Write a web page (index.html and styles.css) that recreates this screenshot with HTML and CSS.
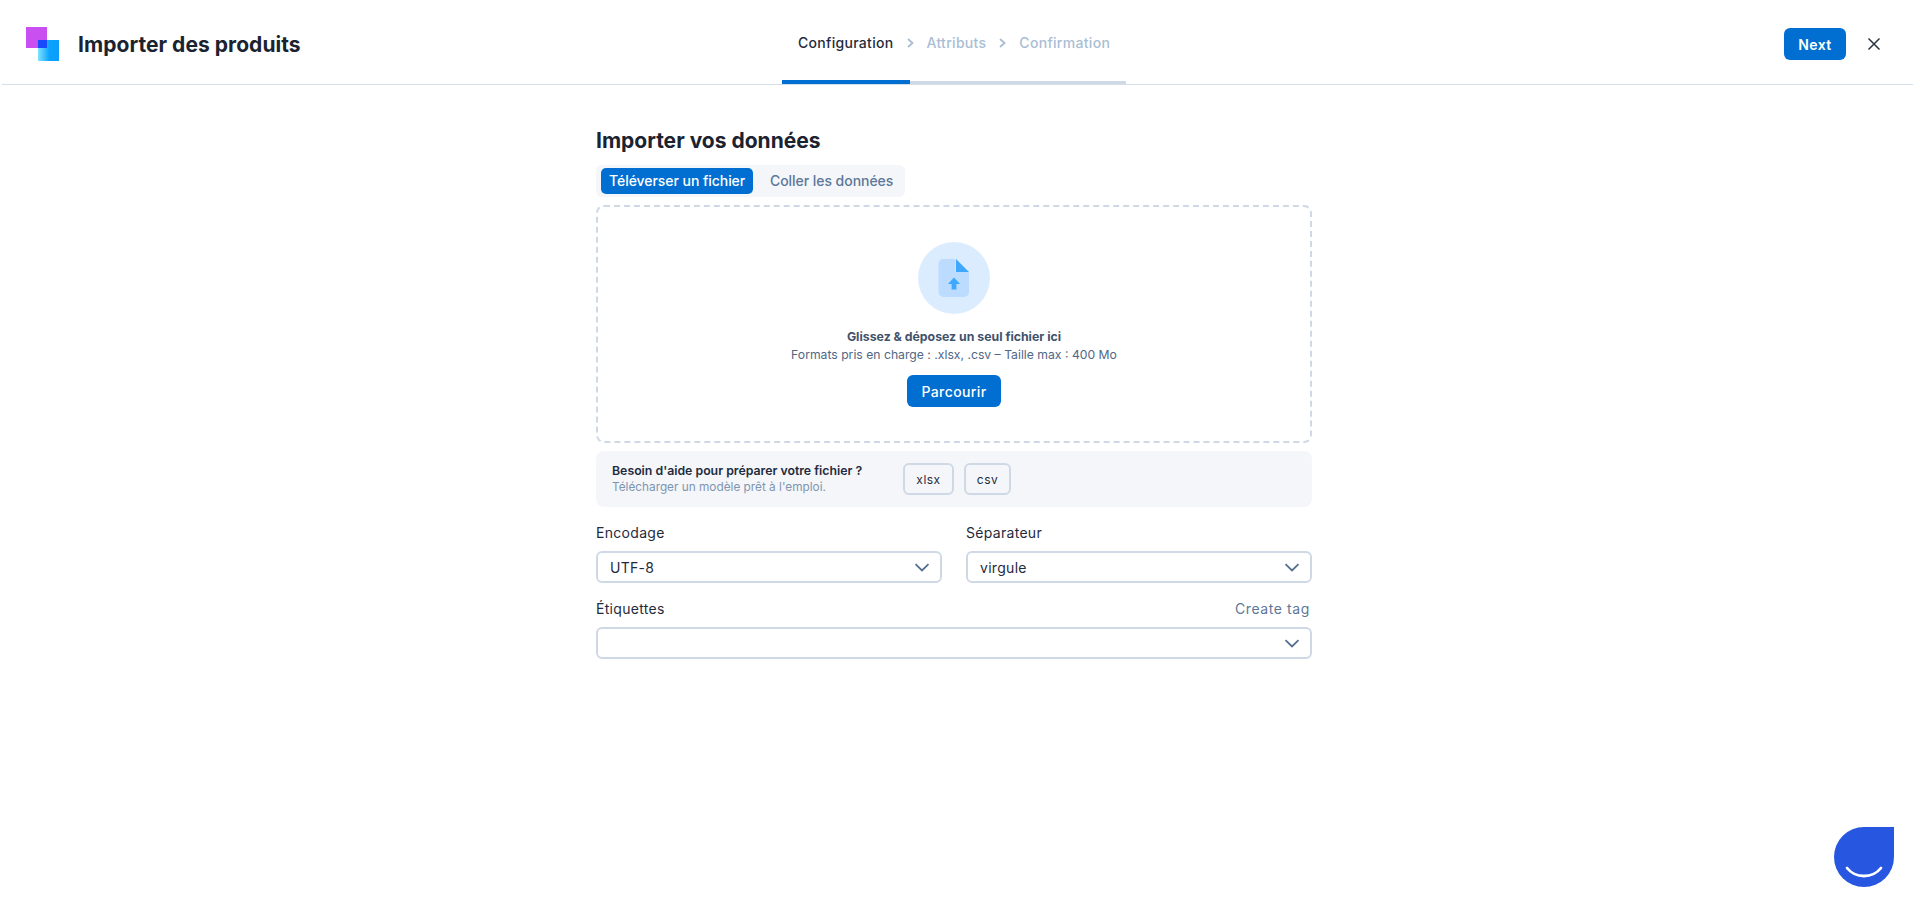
FILE: index.html
```html
<html>
  <head>
    <meta charset="UTF-8" />
    <meta name="viewport" content="width=device-width, initial-scale=1.0" />
    <title>Importer des produits</title>
    <link rel="stylesheet" href="styles.css">
  </head>
  <body>
    <div class="topbar">
      <div class="brand">
        <svg class="logo" width="33" height="34" viewBox="0 0 33 34">
          <defs>
            <linearGradient id="blueGrad" x1="0" y1="0" x2="1" y2="0">
              <stop offset="0" stop-color="#7fe3ff" />
              <stop offset="0.55" stop-color="#0aa2ff" />
              <stop offset="1" stop-color="#0a9dfc" />
            </linearGradient>
          </defs>
          <rect x="0" y="0" width="21" height="21" fill="#c94ff0" />
          <rect x="12" y="13" width="21" height="21" fill="url(#blueGrad)" />
          <rect x="12" y="13" width="9" height="8" fill="#1849fb" />
        </svg>
        <span class="brand-title">Importer des produits</span>
      </div>
      <div class="steps">
        <span class="step step-active">Configuration</span>
        <svg class="step-arrow" width="7" height="10" viewBox="0 0 7 10"><path d="M1 1l4.500 4L1 9" fill="none" stroke="#a9bdd3" stroke-width="1.800"/></svg>
        <span class="step">Attributs</span>
        <svg class="step-arrow" width="7" height="10" viewBox="0 0 7 10"><path d="M1 1l4.500 4L1 9" fill="none" stroke="#a9bdd3" stroke-width="1.800"/></svg>
        <span class="step">Confirmation</span>
        <div class="step-progress"><div class="step-progress-done"></div></div>
      </div>
      <div class="top-actions">
        <button class="btn btn-next">Next</button>
        <button class="close">
          <svg width="14" height="14" viewBox="0 0 14 14"><path d="M1.500 1.500l11 11M12.500 1.500l-11 11" fill="none" stroke="#2a3342" stroke-width="1.500"/></svg>
        </button>
      </div>
    </div>

    <div class="main">
      <div class="panel">
        <h1>Importer vos données</h1>
        <div class="tabs">
          <div class="tab tab-active">Téléverser un fichier</div>
          <div class="tab">Coller les données</div>
        </div>
        <div class="dropzone">
          <div class="drop-icon">
            <svg width="32" height="38" viewBox="0 0 32 38">
              <path d="M5 0H17V13H30.500V33a5 5 0 0 1-5 5H5a5 5 0 0 1-5-5V5a5 5 0 0 1 5-5Z" fill="#bbdcff" transform="translate(0.500 0)"/>
              <path d="M18 0L31 13H18Z" fill="#3ea8ff"/>
              <path d="M16 18.500l6 6.500h-3.600v5.500h-4.800V25H10Z" fill="#3ea8ff"/>
            </svg>
          </div>
          <div class="drop-title">Glissez &amp; déposez un seul fichier ici</div>
          <div class="drop-sub">Formats pris en charge : .xlsx, .csv – Taille max : 400 Mo</div>
          <button class="btn btn-browse">Parcourir</button>
        </div>
        <div class="help">
          <div class="help-text">
            <div class="help-title">Besoin d'aide pour préparer votre fichier ?</div>
            <div class="help-sub">Télécharger un modèle prêt à l'emploi.</div>
          </div>
          <button class="file-btn">xlsx</button>
          <button class="file-btn file-btn-csv">csv</button>
        </div>
        <div class="fields">
          <div class="field">
            <div class="field-head"><label>Encodage</label></div>
            <div class="select">
              <span>UTF-8</span>
              <svg width="16" height="9" viewBox="0 0 16 9"><path d="M1.500 1.200L8 7.500l6.500-6.300" fill="none" stroke="#54708f" stroke-width="1.800"/></svg>
            </div>
          </div>
          <div class="field">
            <div class="field-head"><label>Séparateur</label></div>
            <div class="select">
              <span>virgule</span>
              <svg width="16" height="9" viewBox="0 0 16 9"><path d="M1.500 1.200L8 7.500l6.500-6.300" fill="none" stroke="#54708f" stroke-width="1.800"/></svg>
            </div>
          </div>
          <div class="field field-wide">
            <div class="field-head"><label>Étiquettes</label><a class="create-tag">Create tag</a></div>
            <div class="select">
              <span></span>
              <svg width="16" height="9" viewBox="0 0 16 9"><path d="M1.500 1.200L8 7.500l6.500-6.300" fill="none" stroke="#54708f" stroke-width="1.800"/></svg>
            </div>
          </div>
        </div>
      </div>
    </div>

    <div class="chat-bubble">
      <svg width="40" height="14" viewBox="0 0 40 14"><path d="M3 3c4 5 10 8 17 8s13-3 17-8" fill="none" stroke="#fff" stroke-width="2.800" stroke-linecap="round"/></svg>
    </div>
  </body>
</html>
```

FILE: styles.css
```css
* {
  box-sizing: border-box;
}
body {
  margin: 0;
  background-color: white;
  font-family: "Inter", "Noto Sans", sans-serif;
  color: #1b2330;
}
button {
  font-family: inherit;
  cursor: pointer;
}
.topbar {
  display: grid;
  grid-template-columns: 756.5px 344px 1fr;
  align-items: center;
  height: 85px;
  margin-left: 2px;
  padding: 0 26px 0 23.5px;
  border-bottom: 1px solid #d5dfea;
}
.brand {
  display: flex;
  align-items: center;
  gap: 19.5px;
  padding-top: 4px;
}
.brand-title {
  font-size: 21px;
  font-weight: 700;
  letter-spacing: 0.05px;
  color: #1b2330;
}
.steps {
  position: relative;
  display: flex;
  align-items: center;
  gap: 13px;
  height: 84px;
  padding-left: 16px;
  font-size: 14px;
  font-weight: 500;
  letter-spacing: 0.3px;
}
.step {
  color: #a9bdd3;
}
.step-active {
  color: #1f2b3d;
}
.step-arrow {
  margin-top: 2px;
}
.step-progress {
  position: absolute;
  left: 0;
  right: 0;
  bottom: 0;
  height: 3px;
  background-color: #cfd9e5;
}
.step-progress-done {
  position: absolute;
  left: 0;
  bottom: 0;
  width: 128px;
  height: 4px;
  background-color: #006fd1;
}
.top-actions {
  display: flex;
  justify-content: flex-end;
  align-items: center;
  gap: 15px;
  padding-top: 4px;
}
.btn {
  border: none;
  border-radius: 6px;
  background-color: #006fd1;
  color: white;
  font-weight: 600;
}
.btn-next {
  width: 62px;
  height: 32px;
  font-size: 14px;
  letter-spacing: 0.4px;
}
.close {
  display: flex;
  justify-content: center;
  align-items: center;
  width: 26px;
  height: 32px;
  padding: 0;
  border: none;
  background: none;
}
.main {
  display: flex;
  justify-content: center;
  padding-right: 5px;
}
.panel {
  width: 716px;
  padding-top: 43px;
}
h1 {
  margin: 0 0 11px 0;
  font-size: 21px;
  line-height: 26px;
  font-weight: 700;
  color: #1b2330;
}
.tabs {
  display: inline-flex;
  align-items: center;
  width: 309px;
  height: 32px;
  padding: 0 5px;
  border-radius: 6px;
  background-color: #f4f6fa;
  vertical-align: top;
}
.tab {
  display: flex;
  align-items: center;
  height: 26px;
  padding: 0 8px 1px 8px;
  border-radius: 5px;
  font-size: 14px;
  font-weight: 500;
  letter-spacing: -0.05px;
  color: #5c7799;
  white-space: nowrap;
}
.tab-active {
  width: 152px;
  margin-right: 9px;
  background-color: #006fd1;
  color: white;
}
.dropzone {
  display: flex;
  flex-direction: column;
  align-items: center;
  height: 238px;
  margin-top: 8px;
  padding-top: 35px;
  border: 2px dashed #cfd9e5;
  border-radius: 8px;
}
.drop-icon {
  display: flex;
  justify-content: center;
  align-items: center;
  width: 72px;
  height: 72px;
  border-radius: 50%;
  background-color: #dcecff;
}
.drop-title {
  margin-top: 14px;
  font-size: 12.3px;
  line-height: 18px;
  font-weight: 700;
  color: #42526b;
}
.drop-sub {
  font-size: 12.2px;
  line-height: 18px;
  color: #4f6785;
}
.btn-browse {
  width: 94px;
  height: 32px;
  margin-top: 11px;
  font-size: 14px;
  font-weight: 500;
  letter-spacing: 0.4px;
}
.help {
  display: flex;
  align-items: center;
  gap: 10px;
  height: 56px;
  margin-top: 8px;
  padding: 0 16px;
  border-radius: 8px;
  background-color: #f4f6fa;
}
.help-text {
  width: 281px;
}
.help-title {
  font-size: 12.3px;
  line-height: 16px;
  font-weight: 600;
  color: #1f2b3d;
}
.help-sub {
  font-size: 11.8px;
  line-height: 16px;
  color: #7e95b0;
}
.file-btn {
  width: 51px;
  height: 32px;
  padding: 0;
  border: 2px solid #cfd9e5;
  border-radius: 6px;
  background-color: #f4f6fa;
  color: #1f2b3d;
  font-size: 12px;
  letter-spacing: 0.5px;
}
.file-btn-csv {
  width: 47px;
}
.fields {
  display: grid;
  grid-template-columns: 346px 346px;
  justify-content: space-between;
  row-gap: 16px;
  margin-top: 16px;
}
.field-wide {
  grid-column: 1 / 3;
}
.field-head {
  display: flex;
  justify-content: space-between;
  align-items: center;
  height: 20px;
  margin-bottom: 8px;
  padding-bottom: 2px;
  font-size: 14px;
  letter-spacing: 0.3px;
  color: #1f2b3d;
}
.create-tag {
  padding-right: 2px;
  color: #5c7799;
  letter-spacing: 0.6px;
}
.select {
  display: flex;
  justify-content: space-between;
  align-items: center;
  height: 32px;
  padding: 0 10px 0 12px;
  border: 2px solid #cfd9e5;
  border-radius: 6px;
  font-size: 14px;
  letter-spacing: 0.3px;
  color: #1f2b3d;
}
.chat-bubble {
  position: fixed;
  right: 19px;
  bottom: 16px;
  display: flex;
  justify-content: center;
  align-items: flex-end;
  width: 60px;
  height: 60px;
  padding-bottom: 8px;
  border-radius: 50% 0 50% 50%;
  background-color: #2756e0;
}
```
